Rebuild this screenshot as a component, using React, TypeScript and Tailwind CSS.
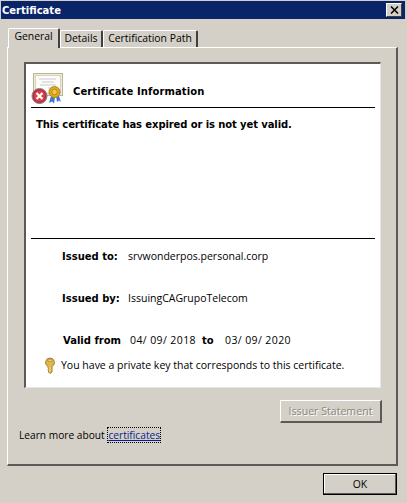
import React from 'react';

const CertIcon = () => (
  <svg width="34" height="34" viewBox="0 0 34 34" className="shrink-0">
    <rect x="2.5" y="1.5" width="29" height="22" fill="#f1ead6" stroke="#bdb39a" />
    <rect x="4.5" y="3.5" width="25" height="18" fill="#fdfcf6" stroke="#d9d2bd" />
    <path d="M8 7h17M11 10h12M9 13h16M17 16h9" stroke="#c4cbd6" strokeWidth="1" />
    <path d="M20 24l-2 7 3-1.500 2 2 1-6zM25 24l1 6 2-1.500 2 1.500-2-6z" fill="#3f78d2" />
    <circle cx="23.500" cy="20" r="5.500" fill="#e0a91e" stroke="#a9892b" />
    <circle cx="23.500" cy="20" r="2.800" fill="#f2c64a" stroke="#c08a14" />
    <circle cx="8.500" cy="24" r="7.500" fill="#b8323a" stroke="#8f7f85" />
    <circle cx="8.500" cy="24" r="5.500" fill="#d8404a" />
    <path d="M5.500 21l6 6M11.500 21l-6 6" stroke="#fff" strokeWidth="2.200" />
  </svg>
);

const KeyIcon = () => (
  <svg width="12" height="17" viewBox="0 0 12 17" className="shrink-0">
    <path d="M6 1a4.500 4.500 0 0 1 2 8.500V15l-2 1.500L4.500 15v-1.500L4 12.500l.5-1L4 10.500v-1A4.500 4.500 0 0 1 6 1z" fill="#e3b64c" stroke="#a47f2c" />
    <rect x="4" y="3" width="4" height="1.500" fill="#fff3c4" stroke="#8a6c28" strokeWidth="0.500" />
    <path d="M6 10v5" stroke="#f6dd93" />
  </svg>
);

export default function App() {
  return (
    <div className="w-[407px] h-[503px] bg-[#d4d0c8] flex flex-col overflow-hidden text-[10px] leading-[13px] text-black font-['DejaVu_Sans',sans-serif]">
      {/* Title bar */}
      <div className="mt-[1px] ml-[1px] mr-[2px] h-[18px] bg-[#0a246a] flex items-center justify-between pl-[1px] pr-[3px] shrink-0">
        <span className="font-bold text-white text-[10px]">Certificate</span>
        <div className="w-[16px] h-[14px] bg-[#d4d0c8] border border-t-white border-l-white border-r-[#404040] border-b-[#404040] flex items-center justify-center">
          <svg width="9" height="8" viewBox="0 0 9 8">
            <path d="M1 0.500l7 7M8 0.500l-7 7" stroke="#000" strokeWidth="1.500" />
          </svg>
        </div>
      </div>

      {/* Tabs */}
      <div className="flex items-end h-[19px] mt-[9px] ml-[8px] shrink-0 font-['Open_Sans',sans-serif] text-[10.400px] relative z-10">
        <div className="w-[52px] h-[20px] -mb-[1px] bg-[#d4d0c8] border-t border-l border-white border-r-2 border-r-[#404040] rounded-t-[2px] flex items-center justify-center pb-[5px]">General</div>
        <div className="w-[43px] h-[17px] border-t border-l border-white border-r-2 border-r-[#404040] rounded-t-[2px] flex items-center justify-center pb-[2px]">Details</div>
        <div className="w-[95px] h-[17px] border-t border-l border-white border-r-2 border-r-[#404040] rounded-t-[2px] flex items-center justify-center pb-[2px]">Certification Path</div>
      </div>

      {/* Panel */}
      <div className="ml-[7px] mr-[9px] h-[419px] shrink-0 border-t border-l border-white border-r-2 border-b-2 border-r-[#5a5a58] border-b-[#5a5a58] flex flex-col pl-[16px] pr-[15px] pt-[14px]">
        <div className="h-[326px] bg-white border-t-2 border-l-2 border-t-[#5a5a58] border-l-[#5a5a58] border-r border-b border-r-[#e8e6e0] border-b-[#e8e6e0] px-[5px] shrink-0 flex flex-col">
          <div className="h-[44px] flex items-center gap-[8px] border-b border-black pt-[6px] shrink-0">
            <CertIcon />
            <span className="font-bold mt-[6px] tracking-[0.1px]">Certificate Information</span>
          </div>
          <div className="h-[131px] border-b border-black pl-[5px] pt-[10px] font-bold tracking-[-0.1px] shrink-0">
            This certificate has expired or is not yet valid.
          </div>
          <div className="flex flex-col pl-[31px] pt-[11px] font-['Open_Sans',sans-serif] text-[10.500px]">
            <div className="flex h-[42px]">
              <span className="w-[66px] text-[10px] font-bold font-['DejaVu_Sans',sans-serif]">Issued to:</span>
              <span>srvwonderpos.personal.corp</span>
            </div>
            <div className="flex h-[42px]">
              <span className="w-[66px] text-[10px] font-bold font-['DejaVu_Sans',sans-serif]">Issued by:</span>
              <span>IssuingCAGrupoTelecom</span>
            </div>
            <div className="flex h-[23px] pl-[1px]">
              <span className="w-[67px] text-[10px] font-bold font-['DejaVu_Sans',sans-serif]">Valid from</span>
              <span className="w-[72px] tracking-[0.4px]">04/ 09/ 2018</span>
              <span className="w-[23px] text-[10px] font-bold font-['DejaVu_Sans',sans-serif]">to</span>
              <span className="tracking-[0.4px]">03/ 09/ 2020</span>
            </div>
            <div className="flex items-center gap-[5px] -ml-[18px]">
              <KeyIcon />
              <span>You have a private key that corresponds to this certificate.</span>
            </div>
          </div>
        </div>

        <div className="flex justify-end mt-[12px] -mr-[1px] shrink-0">
          <div className="w-[102px] h-[23px] border-t border-l border-white border-r-2 border-b-2 border-r-[#5a5a58] border-b-[#5a5a58] flex items-center justify-center text-[#8a8780] [text-shadow:1px_1px_0_#fff] font-['Open_Sans',sans-serif] text-[10.600px]">
            Issuer Statement
          </div>
        </div>

        <div className="-ml-[5px] mt-[6px] font-['Open_Sans',sans-serif] text-[10.200px]">
          Learn more about <span className="ml-[1px] text-[#0a1f8f] underline outline-1 outline-dotted outline-black">certificates</span>
        </div>
      </div>

      {/* Footer */}
      <div className="flex justify-end mt-[7px] mr-[10px] shrink-0">
        <div className="w-[74px] h-[22px] border border-black flex items-center justify-center font-['Open_Sans',sans-serif] text-[10.400px] shadow-[inset_-1px_-1px_0_#5a5a58,inset_1px_1px_0_#fff]">
          OK
        </div>
      </div>
    </div>
  );
}
